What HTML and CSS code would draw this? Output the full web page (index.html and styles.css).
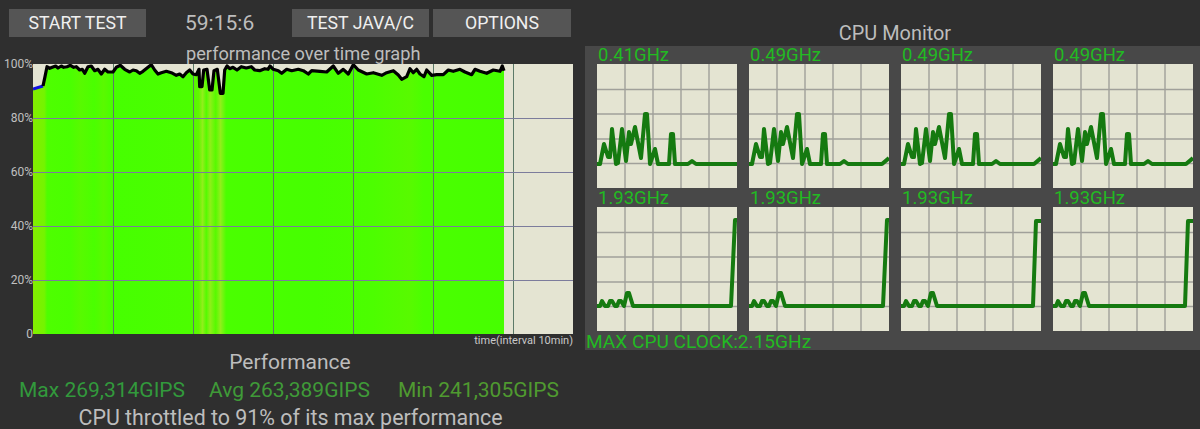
FILE: index.html
```html
<!DOCTYPE html>
<html lang="en">
<head>
<meta charset="utf-8">
<title>CPU Throttling Test</title>
<link rel="stylesheet" href="styles.css">
</head>
<body>
<svg class="defs" width="0" height="0" aria-hidden="true">
  <defs>
    <linearGradient id="heat" x1="0" x2="1" y1="0" y2="0">
      <stop offset="0" stop-color="#84ee00"/>
      <stop offset="0.024" stop-color="#74f400"/>
      <stop offset="0.03" stop-color="#4efe00"/>
      <stop offset="0.08" stop-color="#4aff00"/>
      <stop offset="0.1" stop-color="#58fa00"/>
      <stop offset="0.13" stop-color="#4aff00"/>
      <stop offset="0.15" stop-color="#5af900"/>
      <stop offset="0.17" stop-color="#46ff00"/>
      <stop offset="0.335" stop-color="#4cfe00"/>
      <stop offset="0.352" stop-color="#62f600"/>
      <stop offset="0.36" stop-color="#92ee1c"/>
      <stop offset="0.368" stop-color="#54fb00"/>
      <stop offset="0.376" stop-color="#90ee1a"/>
      <stop offset="0.388" stop-color="#56fa00"/>
      <stop offset="0.398" stop-color="#92ee1c"/>
      <stop offset="0.41" stop-color="#4aff00"/>
      <stop offset="0.6" stop-color="#46ff00"/>
      <stop offset="0.72" stop-color="#4cfe00"/>
      <stop offset="0.8" stop-color="#58fa00"/>
      <stop offset="0.83" stop-color="#4aff00"/>
      <stop offset="1" stop-color="#46ff00"/>
    </linearGradient>
    <g id="grid-lines">
      <path d="M28 0V124M56 0V124M84 0V124M112 0V124M0 25.5H140M0 50H140M0 75H140M0 99.5H140"/>
    </g>
    <polyline id="load-a" points="0,100 3,100 7,80 11,93 13,93 15,65 19,100 21,99 25,65 29,97 32,68 34,80 38,63 44,94 48,50 50,50 53,100 58,85 61,100 72,100 74,70 76,70 78,100 91,100 95,97 99,100 140,100"/>
    <polyline id="load-b" points="0,100 3,100 7,80 11,93 13,93 15,65 19,100 21,99 25,65 29,97 32,68 34,80 38,63 44,94 48,50 50,50 53,100 58,85 61,100 72,100 74,70 76,70 78,100 91,100 95,97 99,100 133,100 140,94"/>
    <polyline id="boost-a" points="0,99 3,99 5,94 8,99 11,99 13,94 15,94 18,99 20,99 22,94 24,94 27,99 30,86 32,86 36,99 134,99 138,13 140,13"/>
    <polyline id="boost-b" points="0,99 3,99 5,94 8,99 11,99 13,94 15,94 18,99 20,99 22,94 24,94 27,99 30,86 32,86 36,99 132,99 135,14 140,14"/>
  </defs>
</svg>

<div class="app">
  <section class="left">
    <div class="toolbar">
      <button class="btn">START TEST</button>
      <span class="timer">59:15:6</span>
      <button class="btn btn-java">TEST JAVA/C</button>
      <button class="btn btn-options">OPTIONS</button>
    </div>
    <h2 class="graph-title">performance over time graph</h2>
    <div class="graph">
      <div class="y-axis">
        <span>100%</span><span>80%</span><span>60%</span><span>40%</span><span>20%</span><span>0</span>
      </div>
      <svg class="plot" width="540" height="270" viewBox="0 0 540 270">
        <rect width="540" height="270" fill="#e4e4d2"/>
        <polygon class="area" points="0,25 10,22 12,12.7 14,2.7 16.7,4.3 19.3,3.3 22.7,2 25,4 28.3,2 30.7,3.3 34,2.7 37.3,1.3 40.7,3.3 43.3,2.7 46.7,6 49.3,5.3 51.7,9.3 55,2.7 58.3,2 61.7,6.7 65,5.3 68.3,10 71.7,5.3 75,8 80,8 83.3,3.3 87.3,1.3 91.7,5.3 96.7,8 100,6 103.3,6.7 106.7,9.3 110,7.3 115,3.3 118.3,.7 121.7,6 125,10 128.3,8.7 133.3,7.3 138.3,8.7 143.3,11.3 146.7,10 150,12.7 153.3,8.7 156.7,6 160,10 163.3,10.7 166,5.3 166.7,22.7 169,22.7 170.7,6 174,5.3 176.7,26 179,26 181,6.7 184.3,5.3 187.3,29.3 190,29.3 191.7,6 194,2 196.7,4.7 200,3.3 204,6 208.3,2.7 213.3,4 218.3,2.7 221.7,6 226.7,6.7 231.7,4.7 235,5.3 237,2 240.3,5.3 245.3,6.7 248.7,9.3 253.7,5.3 258.7,6.7 265.3,5.3 270.3,6.7 275.3,10 278.7,6.7 287,7.3 293.7,8 300.3,2 305.3,9.3 310.3,5.3 315.3,10 320.3,.7 325.3,6 333.7,10 340.3,8.7 348.7,11.3 353.7,8.7 360.3,6.7 365.3,11 368.7,15.3 373.7,12.7 377,4.7 380.3,8.7 383.7,5.3 387,10 391,12.7 393.7,6 398.7,11.3 403.7,10.7 410.3,10.7 415.3,6 420.3,7.3 427,5.3 432,8 438.7,10.7 442,5.3 447,7.3 453.7,9.3 460.3,6 467,7.3 469.3,2 471,6.7 471,270 0,270"/>
        <path class="grid-v" d="M80.5 0V270M160.5 0V270M240.5 0V270M320.5 0V270M400.5 0V270M480.5 0V270"/>
        <path class="grid-h" d="M0 54.5H540M0 108.5H540M0 162.5H540M0 216.5H540"/>
        <polyline class="trace-blue" points="0,25 10,22"/>
        <polyline class="trace" points="10,22 12,12.7 14,2.7 16.7,4.3 19.3,3.3 22.7,2 25,4 28.3,2 30.7,3.3 34,2.7 37.3,1.3 40.7,3.3 43.3,2.7 46.7,6 49.3,5.3 51.7,9.3 55,2.7 58.3,2 61.7,6.7 65,5.3 68.3,10 71.7,5.3 75,8 80,8 83.3,3.3 87.3,1.3 91.7,5.3 96.7,8 100,6 103.3,6.7 106.7,9.3 110,7.3 115,3.3 118.3,.7 121.7,6 125,10 128.3,8.7 133.3,7.3 138.3,8.7 143.3,11.3 146.7,10 150,12.7 153.3,8.7 156.7,6 160,10 163.3,10.7 166,5.3 166.7,22.7 169,22.7 170.7,6 174,5.3 176.7,26 179,26 181,6.7 184.3,5.3 187.3,29.3 190,29.3 191.7,6 194,2 196.7,4.7 200,3.3 204,6 208.3,2.7 213.3,4 218.3,2.7 221.7,6 226.7,6.7 231.7,4.7 235,5.3 237,2 240.3,5.3 245.3,6.7 248.7,9.3 253.7,5.3 258.7,6.7 265.3,5.3 270.3,6.7 275.3,10 278.7,6.7 287,7.3 293.7,8 300.3,2 305.3,9.3 310.3,5.3 315.3,10 320.3,.7 325.3,6 333.7,10 340.3,8.7 348.7,11.3 353.7,8.7 360.3,6.7 365.3,11 368.7,15.3 373.7,12.7 377,4.7 380.3,8.7 383.7,5.3 387,10 391,12.7 393.7,6 398.7,11.3 403.7,10.7 410.3,10.7 415.3,6 420.3,7.3 427,5.3 432,8 438.7,10.7 442,5.3 447,7.3 453.7,9.3 460.3,6 467,7.3 469.3,2 471,6.7"/>
      </svg>
    </div>
    <div class="x-caption">time(interval 10min)</div>
    <h2 class="perf-title">Performance</h2>
    <div class="stats">
      <span class="stat-max">Max 269,314GIPS</span>
      <span class="stat-avg">Avg 263,389GIPS</span>
      <span class="stat-min">Min 241,305GIPS</span>
    </div>
    <p class="throttle">CPU throttled to 91% of its max performance</p>
  </section>

  <section class="right">
    <h2 class="monitor-title">CPU Monitor</h2>
    <div class="monitor">
      <div class="cores">
        <div class="core"><span class="freq">0.41GHz</span><svg class="chart" width="140" height="124" viewBox="0 0 140 124"><use href="#grid-lines" class="chart-grid"/><use href="#load-a" class="chart-line"/></svg></div>
        <div class="core"><span class="freq">0.49GHz</span><svg class="chart" width="140" height="124" viewBox="0 0 140 124"><use href="#grid-lines" class="chart-grid"/><use href="#load-b" class="chart-line"/></svg></div>
        <div class="core"><span class="freq">0.49GHz</span><svg class="chart" width="140" height="124" viewBox="0 0 140 124"><use href="#grid-lines" class="chart-grid"/><use href="#load-b" class="chart-line"/></svg></div>
        <div class="core"><span class="freq">0.49GHz</span><svg class="chart" width="140" height="124" viewBox="0 0 140 124"><use href="#grid-lines" class="chart-grid"/><use href="#load-b" class="chart-line"/></svg></div>
        <div class="core"><span class="freq">1.93GHz</span><svg class="chart" width="140" height="124" viewBox="0 0 140 124"><use href="#grid-lines" class="chart-grid"/><use href="#boost-a" class="chart-line"/></svg></div>
        <div class="core"><span class="freq">1.93GHz</span><svg class="chart" width="140" height="124" viewBox="0 0 140 124"><use href="#grid-lines" class="chart-grid"/><use href="#boost-a" class="chart-line"/></svg></div>
        <div class="core"><span class="freq">1.93GHz</span><svg class="chart" width="140" height="124" viewBox="0 0 140 124"><use href="#grid-lines" class="chart-grid"/><use href="#boost-b" class="chart-line"/></svg></div>
        <div class="core"><span class="freq">1.93GHz</span><svg class="chart" width="140" height="124" viewBox="0 0 140 124"><use href="#grid-lines" class="chart-grid"/><use href="#boost-b" class="chart-line"/></svg></div>
      </div>
      <div class="max-clock">MAX CPU CLOCK:2.15GHz</div>
    </div>
  </section>
</div>
</body>
</html>
```
FILE: styles.css
```css
* { box-sizing: border-box; margin: 0; padding: 0; }

html, body {
  width: 1200px;
  height: 429px;
  overflow: hidden;
  background: #2f2f2f;
  font-family: Roboto, sans-serif;
  color: #bdbdbd;
}

.defs { position: absolute; }

.app { display: flex; }

.left { width: 585px; flex: none; }

.right { flex: 1; }

.toolbar {
  display: flex;
  align-items: center;
  height: 28px;
  margin-top: 9px;
  margin-left: 9px;
}

.btn {
  width: 137px;
  height: 28px;
  border: 0;
  background: #555;
  color: #f0f0f0;
  font: 17.7px/28px Roboto, sans-serif;
}

.timer {
  width: 146px;
  padding-left: 39px;
  font-size: 21px;
  line-height: 28px;
  color: #bdbdbd;
}

.btn-options { margin-left: 4px; width: 138px; }

.graph-title {
  font-size: 18.2px;
  font-weight: 400;
  line-height: 20px;
  height: 20px;
  margin-top: 7px;
  padding-left: 186px;
  white-space: nowrap;
}

.graph { display: flex; align-items: flex-start; }

.y-axis {
  width: 33px;
  height: 286px;
  margin-top: -8px;
  margin-bottom: -8px;
  display: flex;
  flex-direction: column;
  justify-content: space-between;
  align-items: flex-end;
  font-size: 12px;
  line-height: 16px;
  color: #c0c0c0;
}

.plot { display: block; flex: none; }

.area { fill: url(#heat); }

.grid-v { fill: none; stroke: #5c7a68; stroke-width: 1; }

.grid-h { fill: none; stroke: #7c7c9c; stroke-width: 1; }

.trace { fill: none; stroke: #000; stroke-width: 3.2; stroke-linejoin: round; }

.trace-blue { fill: none; stroke: #1010e0; stroke-width: 3; }

.x-caption {
  width: 573px;
  text-align: right;
  font-size: 11px;
  line-height: 14px;
  color: #c8c8c8;
}

.perf-title {
  margin-top: 1px;
  font-size: 21px;
  font-weight: 400;
  line-height: 26px;
  text-align: center;
  width: 580px;
}

.stats {
  display: flex;
  margin-top: 2px;
  padding-left: 19px;
  font-size: 21px;
  line-height: 26px;
  white-space: nowrap;
}

.stat-max { color: #32993c; width: 190px; }
.stat-avg { color: #3f9a38; width: 189px; }
.stat-min { color: #4f9a30; }

.throttle {
  margin-top: 2px;
  font-size: 21.4px;
  line-height: 26px;
  text-align: center;
  width: 581px;
}

.monitor-title {
  font-size: 19.9px;
  font-weight: 400;
  line-height: 24px;
  height: 24px;
  margin-top: 22px;
  text-align: center;
  width: 620px;
  white-space: nowrap;
}

.monitor {
  background: #484848;
  height: 304px;
}

.cores {
  display: grid;
  grid-template-columns: repeat(4, 140px);
  column-gap: 12px;
  padding-left: 12px;
}

.core { display: flex; flex-direction: column; height: 143px; }

.freq {
  height: 18px;
  padding-left: 1px;
  font-size: 18.5px;
  line-height: 18px;
  color: #22ba22;
  white-space: nowrap;
}

.chart { display: block; background: #e4e4d2; flex: none; }

.chart-grid { fill: none; stroke: #a0a09a; stroke-width: 1.4; }

.chart-line {
  fill: none;
  stroke: #157a10;
  stroke-width: 4;
  stroke-linejoin: round;
}

.max-clock {
  padding-left: 1px;
  font-size: 19.1px;
  line-height: 20px;
  color: #22ba22;
  white-space: nowrap;
}
```
